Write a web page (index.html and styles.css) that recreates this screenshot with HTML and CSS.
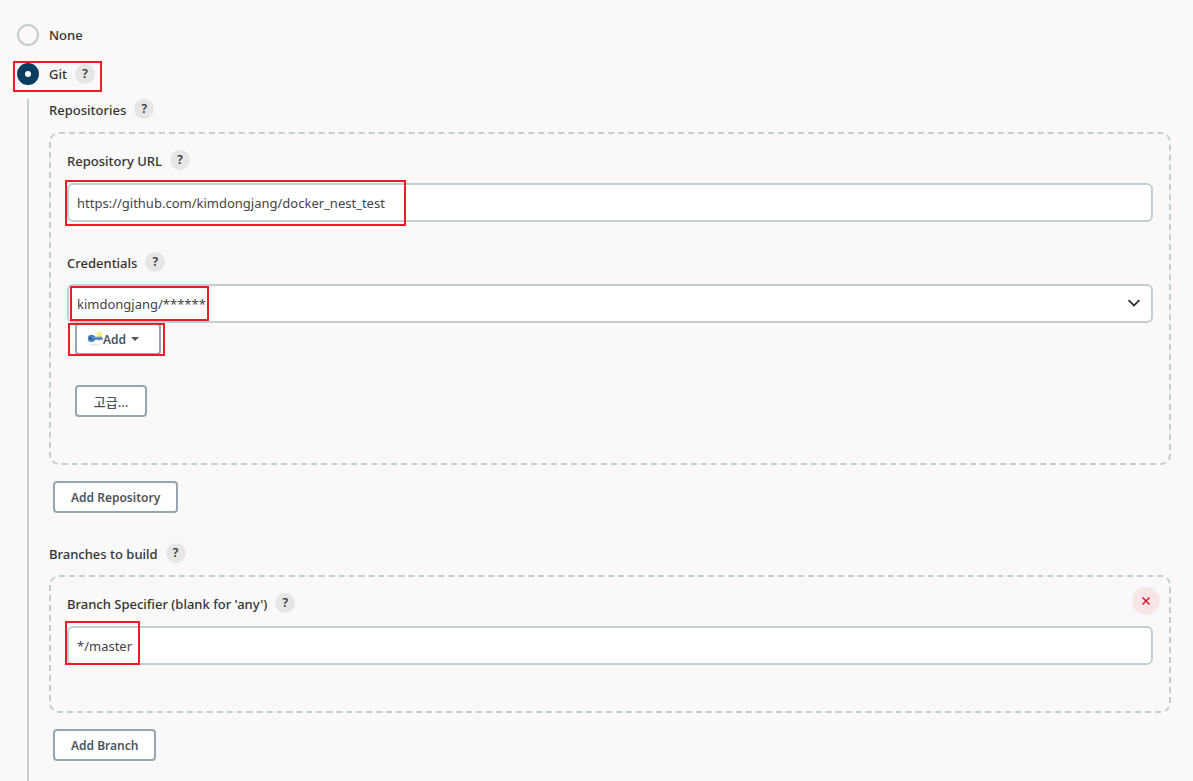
FILE: index.html
```html
<!DOCTYPE html>
<html lang="ko">
<head>
  <meta charset="UTF-8"/>
  <meta name="viewport" content="width=device-width, initial-scale=1"/>
  <title>Source Code Management</title>
  <link rel="stylesheet" href="styles.css">
</head>
<body>
  <form class="scm" autocomplete="off">
    <div class="radio-row">
      <input type="radio" name="scm" id="scm-none" class="radio"/>
      <label for="scm-none">None</label>
    </div>
    <div class="radio-row">
      <input type="radio" name="scm" id="scm-git" class="radio" checked/>
      <label for="scm-git">Git</label>
      <button type="button" class="help" aria-label="Help for Git">?</button>
      <span class="mark mark-git"></span>
    </div>

    <div class="scm-body">
      <div class="label-row">
        <span class="label">Repositories</span>
        <button type="button" class="help" aria-label="Help for Repositories">?</button>
      </div>
      <div class="chunk">
        <div class="label-row">
          <label class="label" for="url">Repository URL</label>
          <button type="button" class="help" aria-label="Help for Repository URL">?</button>
        </div>
        <div class="field">
          <input type="text" id="url" class="control" value="https://github.com/kimdongjang/docker_nest_test"/>
          <span class="mark mark-url"></span>
        </div>
        <div class="label-row next-field">
          <label class="label" for="credentials">Credentials</label>
          <button type="button" class="help" aria-label="Help for Credentials">?</button>
        </div>
        <div class="field">
          <select id="credentials" class="control">
            <option>kimdongjang/******</option>
          </select>
          <svg class="chevron" viewBox="0 0 14 8" width="14" height="8"><path d="M1.5 1.2 L7 6.5 L12.5 1.2" fill="none" stroke="#333" stroke-width="1.8"/></svg>
          <span class="mark mark-credentials"></span>
        </div>
        <div class="add-row">
          <button type="button" class="btn btn-add">
            <svg viewBox="0 0 16 16" width="16" height="16">
              <ellipse cx="8" cy="13.6" rx="6" ry="1" fill="#e6e8ea"/>
              <circle cx="12.5" cy="3.5" r="2.6" fill="#f8ee5c"/>
              <circle cx="12.5" cy="3.5" r="1" fill="#fffbd0"/>
              <path d="M4.5 3.8 C6.4 3.8 7.8 4.7 8.3 5.8 H15.5 V9 H14 V8.4 H13 V9.2 H11 V8.8 H8.3 C7.6 10.2 6.4 11 4.5 11 C2 11 .8 9.4 .8 7.4 C.8 5.4 2 3.8 4.5 3.8Z" fill="#4a7dbc"/>
              <path d="M6 6.6 H15" stroke="#6f9cd2" stroke-width="1"/>
              <circle cx="3.6" cy="7.4" r="1" fill="#23487d"/>
            </svg>
            <span>Add</span>
            <svg class="caret" viewBox="0 0 8 4" width="8" height="4"><path d="M0 0 H8 L4 4 Z" fill="#4d545d"/></svg>
          </button>
          <span class="mark mark-add"></span>
        </div>
        <button type="button" class="btn btn-advanced">고급...</button>
      </div>
      <button type="button" class="btn btn-after">Add Repository</button>

      <div class="label-row next-field">
        <span class="label">Branches to build</span>
        <button type="button" class="help" aria-label="Help for Branches to build">?</button>
      </div>
      <div class="chunk">
        <button type="button" class="delete" aria-label="Delete branch">
          <svg viewBox="0 0 10 10" width="10" height="10"><path d="M1.5 1.5 L8.5 8.5 M8.5 1.5 L1.5 8.5" stroke="#e6001f" stroke-width="1.4"/></svg>
        </button>
        <div class="label-row">
          <label class="label" for="branch">Branch Specifier (blank for 'any')</label>
          <button type="button" class="help" aria-label="Help for Branch Specifier">?</button>
        </div>
        <div class="field">
          <input type="text" id="branch" class="control" value="*/master"/>
          <span class="mark mark-branch"></span>
        </div>
      </div>
      <button type="button" class="btn btn-after">Add Branch</button>
    </div>
  </form>
</body>
</html>
```
FILE: styles.css
```css
* { box-sizing: border-box; }
body {
  margin: 0; background: #f9f9f9; color: #333;
  font-family: "Noto Sans", "Noto Sans CJK KR", sans-serif; font-size: 13px; line-height: 20px;
}
button, input, select { font-family: inherit; }
.scm { display: flex; flex-direction: column; min-height: 100vh; padding: 24px 22px 0 17px; }

/* radios */
.radio-row { position: relative; display: flex; align-items: center; height: 22px; margin-bottom: 17px; font-weight: 500; }
.radio-row label { margin-left: 10px; }
.radio {
  appearance: none; width: 22px; height: 22px; margin: 0;
  border: 2px solid #c3ccd1; border-radius: 50%; background: #f9f9f9;
}
.radio:checked { border: 8px solid #0b3d61; background: #fff; }

.help {
  width: 20px; height: 20px; margin-left: 8px; padding: 0; border: none; border-radius: 50%;
  background: #e6e6e6; color: #333; font-size: 12px; font-weight: 600; line-height: 20px; text-align: center; cursor: pointer;
}

/* git settings */
.scm-body { flex: 1; margin: -3px 0 0 10px; padding: 0 0 20px 20px; border-left: 2px solid #c3cdd2; }
.label-row { display: flex; align-items: center; height: 20px; margin-bottom: 13px; }
.label { padding-top: 2px; font-weight: 500; }
.next-field { margin: 30px 0 12px; }
.chunk { position: relative; padding: 16px 16px 46px; border: 2px dashed #c3cdd2; border-radius: 10px; }

.field { position: relative; }
.control {
  appearance: none; display: block; width: 100%; height: 39px; padding: 0 8px;
  border: 2px solid #c3cdd2; border-radius: 6px; background: #fff; color: #444; font-size: 13px;
}
.chevron { position: absolute; right: 12px; top: 15px; pointer-events: none; }

/* buttons */
.btn {
  display: flex; align-items: center; justify-content: center; height: 32px; padding: 0 16px;
  border: 2px solid #98a5ae; border-radius: 4px; background: #fff;
  color: #4d545d; font-size: 12px; font-weight: 600; cursor: pointer;
}
.btn-add { width: 86px; padding: 0 10px; justify-content: flex-start; }
.caret { margin-left: 5px; }
.add-row { position: relative; padding-left: 8px; }
.btn-advanced { min-width: 72px; margin: 30px 0 0 8px; font-size: 13px; font-weight: 500; }
.btn-after { margin: 16px 0 0 4px; }
.delete {
  position: absolute; top: 10px; right: 9px; display: flex; align-items: center; justify-content: center;
  width: 28px; height: 28px; padding: 0; border: none; border-radius: 50%; background: #f8e5e7; cursor: pointer;
}

/* red highlight boxes */
.mark { position: absolute; border: 2px solid #ed1c24; pointer-events: none; }
.mark-git { left: -4px; top: -2px; width: 89px; height: 31px; }
.mark-url { left: -2px; top: -3px; width: 341px; height: 46px; }
.mark-credentials { left: 3px; top: 2px; width: 139px; height: 35px; }
.mark-add { left: 1px; top: 0; width: 97px; height: 33px; }
.mark-branch { left: -2px; top: -5px; width: 75px; height: 44px; }
```
